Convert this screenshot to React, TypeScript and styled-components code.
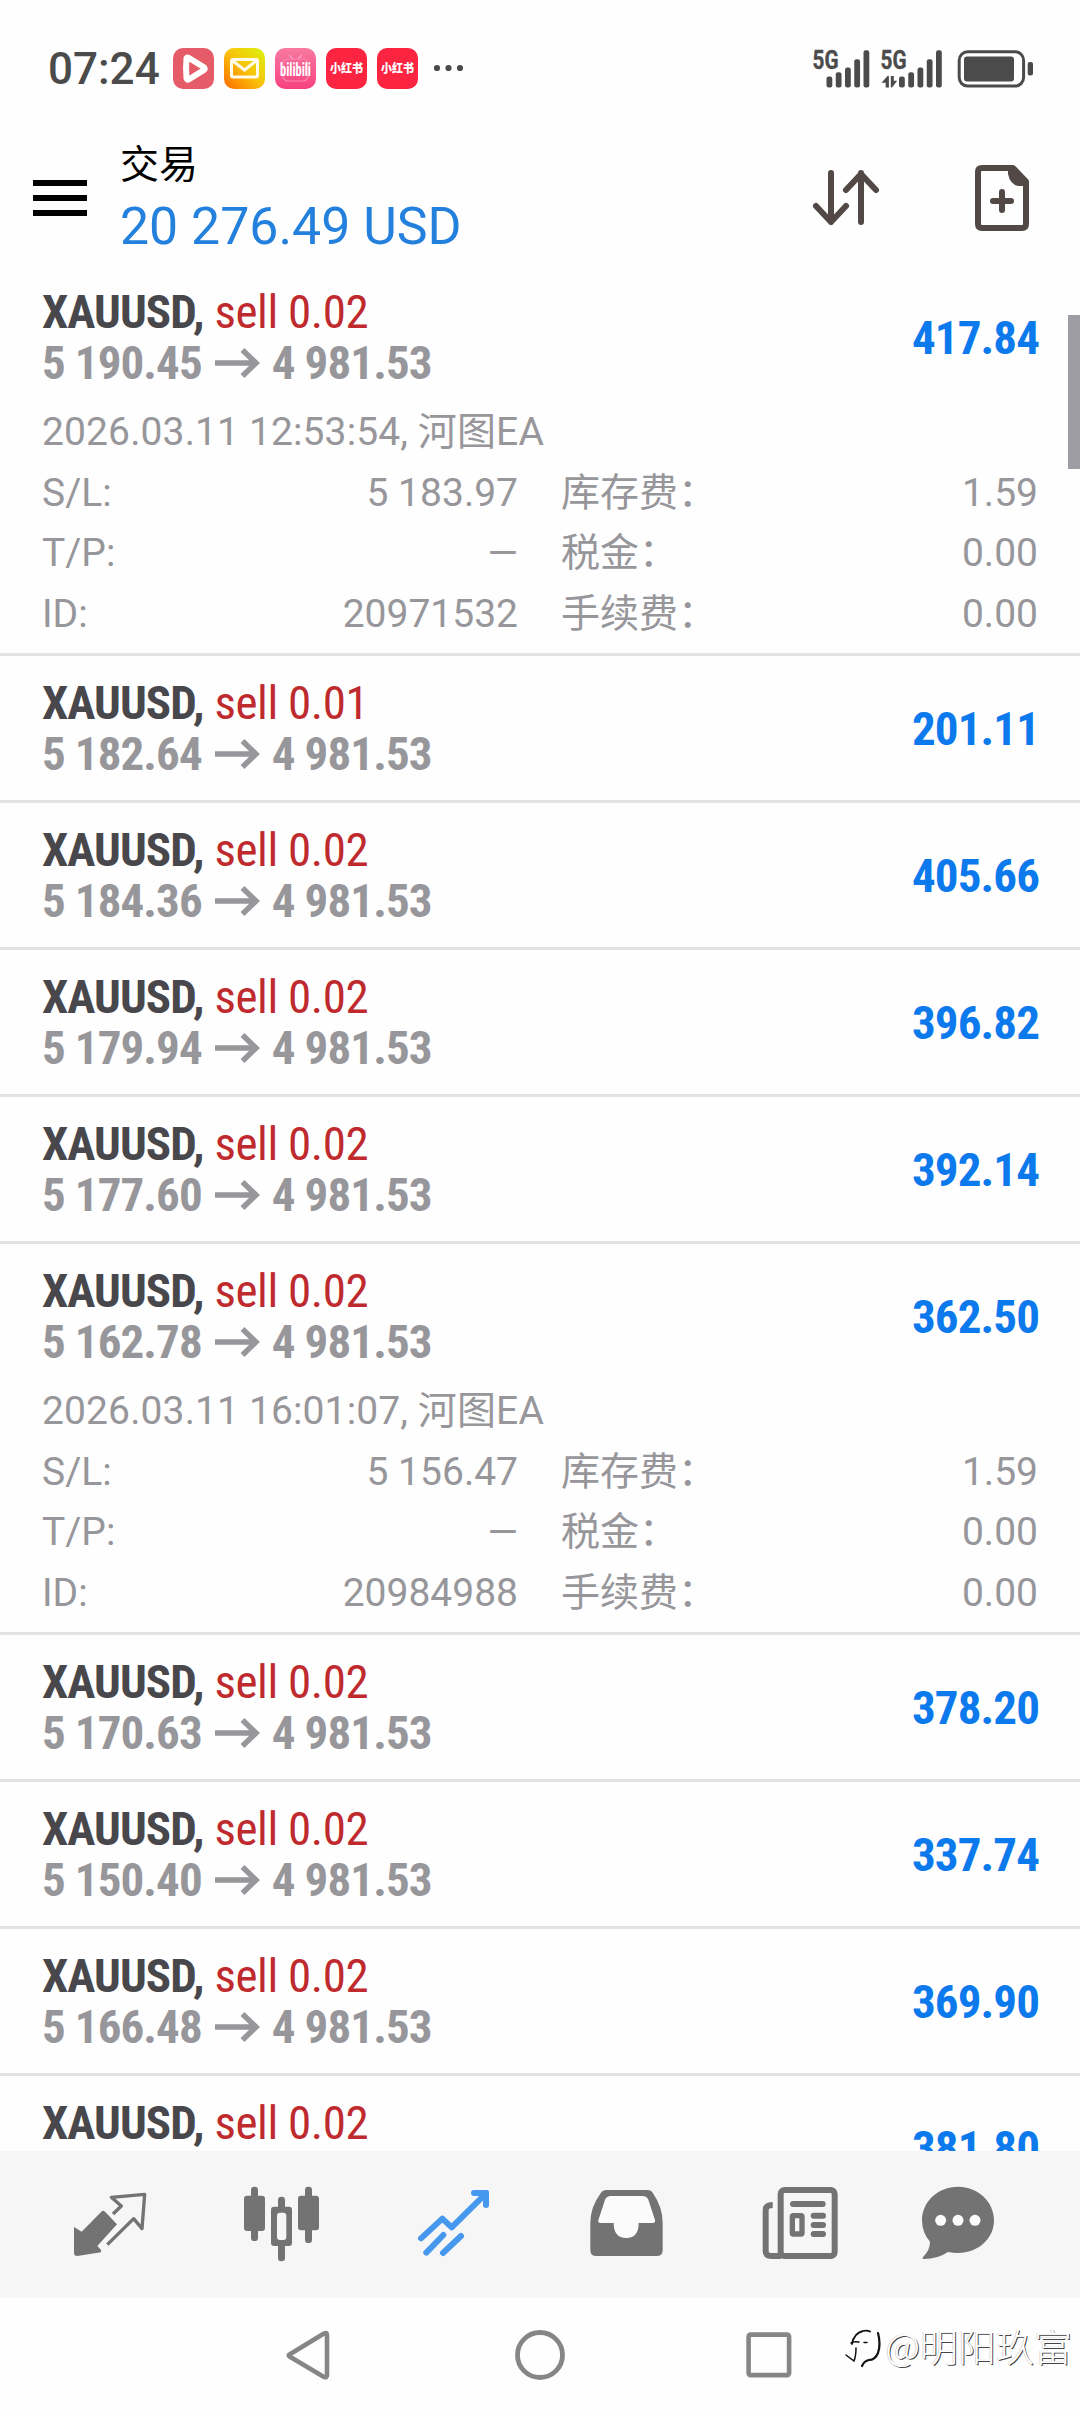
import React from "react";
import styled, { createGlobalStyle } from "styled-components";

const SANS = `Roboto, "Noto Sans CJK SC", sans-serif`;
const CONDENSED = `"Roboto Condensed", Roboto, "Noto Sans CJK SC", sans-serif`;

const GlobalStyle = createGlobalStyle`
  * { box-sizing: border-box; }
  body { margin: 0; background: #fefefe; font-family: ${SANS}; }
  svg { display: block; flex: none; overflow: visible; }
`;

const Screen = styled.div`
  position: relative;
  display: flex;
  flex-direction: column;
  width: 1080px;
  height: 2412px;
  overflow: hidden;
  background: #fefefe;
`;

/* Status bar */
const StatusBar = styled.div`
  flex: none;
  display: flex;
  align-items: center;
  justify-content: space-between;
  height: 137px;
  padding: 0 47px 0 48px;
`;

const StatusGroup = styled.div`
  display: flex;
  align-items: center;
  gap: 10px;
`;

const Clock = styled.span`
  width: 115px;
  color: #4b4b4b;
  font-size: 44px;
  font-weight: 500;
  line-height: 50px;
  white-space: nowrap;
`;

const AppTile = styled.svg`
  width: 41px;
  height: 41px;
`;

/* Header */
const Header = styled.header`
  flex: none;
  display: flex;
  height: 128px;
  padding: 0 51px 0 33px;
`;

const MenuIcon = styled.div`
  display: flex;
  flex-direction: column;
  gap: 9px;
  width: 54px;
  margin: 43px 33px 0 0;
`;

const MenuBar = styled.span`
  height: 6px;
  background: #000;
`;

const Account = styled.div`
  flex: 1;
  padding-top: 1px;
`;

const AccountTitle = styled.div`
  color: #000;
  font-size: 39px;
  line-height: 54px;
`;

const Balance = styled.div`
  color: #2380dc;
  font-size: 51.8px;
  line-height: 69px;
  white-space: nowrap;
`;

const HeaderActions = styled.div`
  display: flex;
  align-items: flex-start;
  gap: 96px;
  padding-top: 28px;
`;

const SortIcon = styled.svg`
  width: 66px;
  height: 56px;
  margin-top: 5px;
`;

const NewOrderIcon = styled.svg`
  width: 54px;
  height: 66px;
`;

/* Positions */
const PositionList = styled.main`
  flex: none;
  position: relative;
  height: 1886px;
  overflow: hidden;
`;

const ScrollThumb = styled.div`
  position: absolute;
  top: 50px;
  right: 0;
  width: 12px;
  height: 154px;
  background: #9e9da3;
`;

const PositionRow = styled.section`
  padding: 21px 42px 0;
  border-bottom: 3px solid #e3e3e3;
`;

const Summary = styled.div`
  display: flex;
  align-items: center;
  justify-content: space-between;
  height: 123px;
  padding-bottom: 21px;
  font-family: ${CONDENSED};
  font-size: 47px;
  line-height: 51px;
  white-space: nowrap;
`;

const Symbol = styled.div`
  color: #48474c;
  font-weight: 700;
  letter-spacing: -0.95px;
`;

const Side = styled.span`
  margin-left: 1px;
  color: #be2a2d;
  font-weight: 400;
  letter-spacing: -0.45px;
`;

const PriceMove = styled.div`
  display: flex;
  align-items: center;
  color: #97969a;
  font-weight: 700;
  letter-spacing: -0.9px;
`;

const MoveArrow = styled.svg`
  width: 45px;
  height: 30px;
  margin: 0 12px 0 13px;
`;

const Profit = styled.div`
  margin-right: -1px;
  color: #0c7aec;
  font-weight: 700;
  letter-spacing: -0.9px;
`;

const Details = styled.div`
  display: grid;
  grid-template-columns: 476px 477px;
  column-gap: 43px;
  margin-top: -7px;
  padding-bottom: 9px;
  color: #97969a;
  font-size: 39px;
  line-height: 60.5px;
`;

const OpenedAt = styled.div`
  grid-column: 1 / -1;
  letter-spacing: 0.12px;
`;

const Field = styled.div`
  display: flex;
  justify-content: space-between;
  height: 60.5px;
`;

/* Bottom bars */
const TabBar = styled.nav`
  flex: none;
  display: flex;
  height: 147px;
  padding: 0 24px;
  background: #f6f6f6;
`;

const TabIcon = styled.svg`
  width: 172px;
  height: 147px;
`;

const SystemBar = styled.footer`
  flex: none;
  display: flex;
  align-items: center;
  justify-content: center;
  gap: 181px;
  height: 114px;
`;

const SystemIcon = styled.svg`
  width: 50px;
  height: 52px;
`;

const Watermark = styled.div`
  position: absolute;
  right: 8px;
  bottom: 41px;
  display: flex;
  align-items: center;
  gap: 3px;
  color: #fff;
  font-family: "Noto Sans CJK SC", sans-serif;
  font-size: 38px;
  font-weight: 300;
  line-height: 48px;
  white-space: nowrap;
  text-shadow: -0.5px -0.5px 0 #bdbdbd, 1px 1px 0.5px #444;
`;

const WatermarkLogo = styled.svg`
  width: 38px;
  height: 44px;
  margin-top: 8px;
`;

type Extra = { opened: string; sl: string; id: string; swap: string };
type Position = { lot: string; open: string; profit: string; extra?: Extra };

const positions: Position[] = [
  {
    lot: "0.02", open: "5 190.45", profit: "417.84",
    extra: { opened: "2026.03.11 12:53:54, 河图EA", sl: "5 183.97", id: "20971532", swap: "1.59" },
  },
  { lot: "0.01", open: "5 182.64", profit: "201.11" },
  { lot: "0.02", open: "5 184.36", profit: "405.66" },
  { lot: "0.02", open: "5 179.94", profit: "396.82" },
  { lot: "0.02", open: "5 177.60", profit: "392.14" },
  {
    lot: "0.02", open: "5 162.78", profit: "362.50",
    extra: { opened: "2026.03.11 16:01:07, 河图EA", sl: "5 156.47", id: "20984988", swap: "1.59" },
  },
  { lot: "0.02", open: "5 170.63", profit: "378.20" },
  { lot: "0.02", open: "5 150.40", profit: "337.74" },
  { lot: "0.02", open: "5 166.48", profit: "369.90" },
];

function PositionItem({ lot, open, profit, extra }: Position) {
  return (
    <PositionRow>
      <Summary>
        <div>
          <Symbol>XAUUSD, <Side>sell {lot}</Side></Symbol>
          {open && (
            <PriceMove>
              {open}
              <MoveArrow viewBox="0 0 45 30" fill="none" stroke="#97969a" strokeWidth="5.5">
                <path d="M0 15H41M27.5 2l13.5 13L27.5 28" />
              </MoveArrow>
              4 981.53
            </PriceMove>
          )}
        </div>
        <Profit>{profit}</Profit>
      </Summary>
      {extra && (
        <Details>
          <OpenedAt>{extra.opened}</OpenedAt>
          <Field><span>S/L:</span><span>{extra.sl}</span></Field>
          <Field><span>库存费：</span><span>{extra.swap}</span></Field>
          <Field><span>T/P:</span><span>—</span></Field>
          <Field><span>税金：</span><span>0.00</span></Field>
          <Field><span>ID:</span><span>{extra.id}</span></Field>
          <Field><span>手续费：</span><span>0.00</span></Field>
        </Details>
      )}
    </PositionRow>
  );
}

/* The last visible row: its second line is under the tab bar. */
const ClippedSummary = styled(Summary)`
  align-items: flex-start;
`;

const ClippedProfit = styled(Profit)`
  padding-top: 25px;
`;

function RedNoteTile() {
  return (
    <AppTile viewBox="0 0 41 41">
      <rect width="41" height="41" rx="10" fill="#fb2441" />
      <text x="20.5" y="25" textAnchor="middle" textLength="33" lengthAdjust="spacingAndGlyphs" fontFamily="Noto Sans CJK SC, sans-serif" fontSize="12.5" fontWeight="900" fill="#fff">小红书</text>
    </AppTile>
  );
}

function StatusIcons() {
  const bars = [26.3, 22, 17.3, 9, 0];
  return (
    <svg width="221" height="40" viewBox="812 47.5 221 40" fill="#4b4b4b">
      {[812.5, 880.5].map((x) => (
        <text key={x} x={x} y="67.3" textLength="26" lengthAdjust="spacingAndGlyphs" fontFamily="Roboto, sans-serif" fontSize="26" fontWeight="700" stroke="#4b4b4b" strokeWidth="0.4">5G</text>
      ))}
      {[826.5, 899].map((x) =>
        bars.map((t, i) => (
          <rect key={`${x}-${i}`} x={x + i * 9.25} y={48.7 + t} width="5.8" height={37.3 - t} rx="2.2" />
        ))
      )}
      <path d="M881.5 81.2l6-6.7q1.4-.6 1.4 1.2V86h-3.2v-4.8zM890.8 74.4h3v4.8h3.4l-5 6.6q-1.4.6-1.4-.9z" />
      <rect x="959.2" y="50.2" width="64.4" height="34.4" rx="8.5" fill="none" stroke="#4b4b4b" strokeWidth="3" />
      <rect x="964" y="55" width="50" height="25" rx="3" />
      <rect x="1027.7" y="60.5" width="5.3" height="13.6" rx="2" />
    </svg>
  );
}

const G = "#737373";

export default function App() {
  return (
    <Screen>
      <GlobalStyle />
      <StatusBar>
        <StatusGroup>
          <Clock>07:24</Clock>
          <AppTile viewBox="0 0 41 41">
            <rect width="41" height="41" rx="10" fill="#e55b68" />
            <path d="M13.5 10Q14 9 15.5 9.8L31 19.3Q32.5 20.8 31 22L16 31.3Q14 32.3 13.5 30.5Q12.6 20 13.5 10Z" fill="#e55b68" stroke="#fff" strokeWidth="6" strokeLinejoin="round" />
          </AppTile>
          <AppTile viewBox="0 0 41 41">
            <defs>
              <linearGradient id="mail" x1="0" y1="1" x2="1" y2="0">
                <stop offset="0" stopColor="#ff6a00" />
                <stop offset="0.5" stopColor="#f9c10a" />
                <stop offset="1" stopColor="#d9f50a" />
              </linearGradient>
            </defs>
            <rect width="41" height="41" rx="10" fill="url(#mail)" />
            <rect x="7.5" y="11.5" width="26" height="17.5" rx="1.5" fill="none" stroke="#fffbe8" strokeWidth="3" />
            <path d="M9 13l11.5 9L32 13" fill="none" stroke="#fffbe8" strokeWidth="3" />
          </AppTile>
          <AppTile viewBox="0 0 41 41">
            <defs>
              <linearGradient id="bili" x1="0" y1="0" x2="0" y2="1">
                <stop offset="0" stopColor="#f77aa2" />
                <stop offset="1" stopColor="#f8417f" />
              </linearGradient>
            </defs>
            <rect width="41" height="41" rx="10" fill="url(#bili)" />
            <path d="M14 7l4 4M27 7l-4 4" stroke="#fba6c3" strokeWidth="1.2" />
            <rect x="8" y="11" width="25" height="22" rx="5" fill="none" stroke="#fb86ad" strokeWidth="1.2" />
            <text x="20.5" y="27.5" textAnchor="middle" textLength="31" lengthAdjust="spacingAndGlyphs" fontFamily="Roboto Condensed, sans-serif" fontSize="18" fontWeight="700" fill="#fff">bilibili</text>
          </AppTile>
          <RedNoteTile />
          <RedNoteTile />
          <svg width="40" height="10" viewBox="0 0 40 10" fill="#4b4b4b">
            <circle cx="9" cy="4" r="3.1" />
            <circle cx="20.5" cy="4" r="3.1" />
            <circle cx="32" cy="4" r="3.1" />
          </svg>
        </StatusGroup>
        <StatusIcons />
      </StatusBar>

      <Header>
        <MenuIcon>
          <MenuBar />
          <MenuBar />
          <MenuBar />
        </MenuIcon>
        <Account>
          <AccountTitle>交易</AccountTitle>
          <Balance>20 276.49 USD</Balance>
        </Account>
        <HeaderActions>
          <SortIcon viewBox="0 0 66 56" fill="none" stroke="#524846" strokeWidth="6" strokeLinecap="round" strokeLinejoin="round">
            <path d="M18 3v49M3 36l15 16L33 36M48 52V3M33 20L48 4L63 20" />
          </SortIcon>
          <NewOrderIcon viewBox="0 0 54 66" fill="none" stroke="#524846" strokeWidth="6" strokeLinejoin="round">
            <path d="M7 3H38L51 16.5V59Q51 63 47 63H7Q3 63 3 59V7Q3 3 7 3Z" />
            <path d="M33 3V9Q35 19 43 21H53V15L40 2Z" fill="#524846" stroke="none" />
            <path d="M27 27V45M18 36H36" strokeLinecap="round" />
          </NewOrderIcon>
        </HeaderActions>
      </Header>

      <PositionList>
        {positions.map((p) => <PositionItem key={p.open} {...p} />)}
        <PositionRow>
          <ClippedSummary>
            <Symbol>XAUUSD, <Side>sell 0.02</Side></Symbol>
            <ClippedProfit>381.80</ClippedProfit>
          </ClippedSummary>
        </PositionRow>
        <ScrollThumb />
      </PositionList>

      <TabBar>
        <TabIcon viewBox="72 213 516 441">
          <path d="M222 441L245 455L304 395Q309 390 315 395L351 433L292 498L303 510V517L232 528Q222 528 222 519Z" fill={G} />
          <path d="M339 402L364 378L334 352L434 343L426 446L401 416L322 494" fill="none" stroke={G} strokeWidth="10" strokeLinejoin="round" />
        </TabIcon>
        <TabIcon viewBox="588 213 516 441" fill={G}>
          <rect x="753" y="320" width="21" height="163" rx="10" />
          <rect x="732" y="347" width="63" height="106" rx="9" />
          <rect x="915" y="320" width="21" height="169" rx="10" />
          <rect x="894" y="347" width="63" height="104" rx="9" />
          <rect x="834" y="350" width="21" height="194" rx="10" />
          <rect x="813" y="380" width="63" height="118" rx="9" />
          <rect x="831" y="398" width="28" height="82" rx="9" fill="#f6f6f6" />
        </TabIcon>
        <TabIcon viewBox="24 213 516 441" fill="none" stroke="#4698ee" strokeWidth="18" strokeLinecap="round" strokeLinejoin="round">
          <path d="M183 475L247 416L275 442L372 346M342 339H378V375" />
          <path d="M372 339H378V346L371 347Z" />
          <path d="M250 465L199 518M303 468L249 519" />
        </TabIcon>
        <TabIcon viewBox="540 213 516 441" fill={G}>
          <path d="M740 330H862Q873 330 879 340Q908 382 908 429V510Q908 528 890 528H709Q691 528 691 510V429Q691 382 722 340Q728 330 740 330Z" />
          <path d="M752 348Q740 348 735 359L715 421Q713 429 721 429H761Q761 474 799 474Q836 474 836 429H878Q887 429 885 420L865 359Q860 348 848 348Z" fill="#fbfbfb" />
        </TabIcon>
        <TabIcon viewBox="-24 213 516 441" fill="none" stroke={G} strokeWidth="18">
          <rect x="182" y="330" width="162" height="198" rx="12" />
          <path d="M158 375Q137 375 137 390V512Q137 528 154 528H184" />
          <path d="M219 372H308M281 407H309M281 435H309M281 462H309" strokeLinecap="round" />
          <rect x="217" y="407" width="29" height="55" rx="3" strokeWidth="16" />
        </TabIcon>
        <TabIcon viewBox="492 213 516 441" fill={G}>
          <path d="M714 320C774 320 822 365 822 421C822 477 774 519 714 519Q699 519 684 516Q653 537 612 537Q604 536 610 530Q630 510 630 485Q606 458 606 421C606 365 654 320 714 320Z" />
          <circle cx="662" cy="421" r="16.5" fill="#fbfbfb" />
          <circle cx="714" cy="421" r="16.5" fill="#fbfbfb" />
          <circle cx="765" cy="421" r="16.5" fill="#fbfbfb" />
        </TabIcon>
      </TabBar>

      <SystemBar>
        <SystemIcon viewBox="0 0 50 52" fill="none" stroke="#868686" strokeWidth="4.6" strokeLinejoin="round">
          <path d="M5.5 25.5Q4 26.5 5.5 27.5L40 48Q43 49 43 46V6Q43 3 40 4.5Z" />
        </SystemIcon>
        <SystemIcon viewBox="0 0 50 52" fill="none" stroke="#868686" strokeWidth="4.8">
          <circle cx="25" cy="26" r="22.5" />
        </SystemIcon>
        <SystemIcon viewBox="0 0 50 52" fill="none" stroke="#868686" strokeWidth="4.6">
          <rect x="2.6" y="5.6" width="40.5" height="40.5" rx="2" />
        </SystemIcon>
      </SystemBar>

      <Watermark>
        <WatermarkLogo viewBox="0 0 38 44" fill="none" stroke="#111" strokeLinecap="round">
          <path d="M8 17Q10 6 19 4Q23 3 26 4.5" strokeWidth="1.8" />
          <path d="M34 6Q37 17 34 26Q31 33 25 33Q20 34 18 39" strokeWidth="2.2" />
          <path d="M7 16Q9 14 15 15M12 21Q12 29 10 34L2 28M20 15.5H23" strokeWidth="1.5" />
        </WatermarkLogo>
        @明阳玖富
      </Watermark>
    </Screen>
  );
}
